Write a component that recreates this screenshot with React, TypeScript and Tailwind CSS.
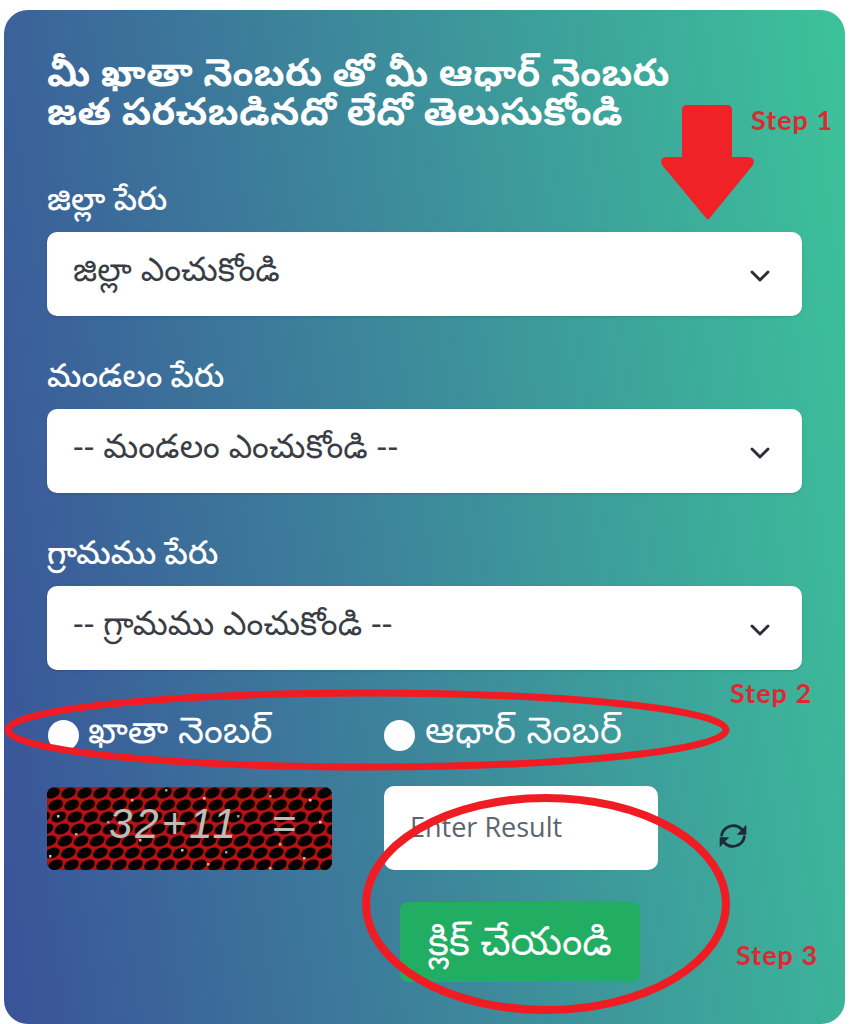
import { ChevronDown } from "lucide-react";

const font = "font-['Noto_Sans','Noto_Sans_Telugu','Lohit_Telugu','DejaVu_Sans',sans-serif]";

// noise dots on the captcha image
const specks = [
  [118, 2, "#9aa08c"], [156, 10, "#c9c9b0"], [84, 12, "#e0a080"], [222, 8, "#8fa58c"], [262, 12, "#d8d0b0"],
  [10, 28, "#e8c0a0"], [60, 34, "#8fa58c"], [28, 46, "#a8b090"], [92, 52, "#d8b090"], [134, 62, "#c8c8b0"],
  [178, 64, "#9aa08c"], [232, 56, "#e0a080"], [256, 70, "#c0c0a0"], [2, 68, "#d8c0a0"], [160, 76, "#e0b080"],
  [222, 80, "#b8b8a0"], [190, 28, "#8fa58c"], [272, 34, "#d8d0c0"],
] as const;

function SelectField({ label, value }: { label: string; value: string }) {
  return (
    <div className="flex flex-col">
      <label className="h-[46px] text-[32px] leading-[24px] font-medium text-white">{label}</label>
      <div className="h-[84px] rounded-[10px] bg-white pl-[26px] pr-[26px] flex items-center justify-between shadow-sm">
        <span className="text-[33px] leading-[40px] tracking-[0.15px] text-[#3a3e44] -mt-[10px]">{value}</span>
        <ChevronDown size={32} strokeWidth={2.2} className="text-[#2a2f36] mt-[3px]" />
      </div>
    </div>
  );
}

function Captcha() {
  return (
    <div className="relative w-[285px] h-[83px] mt-[1px] rounded-lg overflow-hidden bg-black">
      <svg width="285" height="83" className="block">
        <defs>
          <pattern id="mesh" width="16" height="24" patternUnits="userSpaceOnUse" patternTransform="skewX(-22)">
            <rect width="16" height="24" fill="#b81212" />
            <ellipse cx="8" cy="6" rx="7" ry="5.6" fill="#060202" />
            <ellipse cx="0" cy="18" rx="7" ry="5.6" fill="#060202" />
            <ellipse cx="16" cy="18" rx="7" ry="5.6" fill="#060202" />
          </pattern>
        </defs>
        <rect width="285" height="83" fill="url(#mesh)" />
        {specks.map(([x, y, c]) => (
          <rect key={`${x}-${y}`} x={x} y={y} width="2.5" height="2.5" fill={c} />
        ))}
      </svg>
      <span className="absolute left-[62px] top-[14px] text-[42px] leading-[46px] italic text-[#bdbdb8] font-['Liberation_Sans',sans-serif] tracking-[3px] [word-spacing:18px]">32+11 =</span>
    </div>
  );
}

function RefreshIcon() {
  return (
    <svg width="32" height="32" viewBox="0 0 24 24" fill="none" className="ml-[59px] mt-[34px] text-[#1f2a33]">
      <path d="M3.5 11.5A8.8 8.8 0 0 1 18.5 7" stroke="currentColor" strokeWidth="2.1" strokeLinecap="round" />
      <path d="M22 3.6V11H14.8Z" fill="currentColor" />
      <path d="M20.5 12.5A8.8 8.8 0 0 1 5.5 17" stroke="currentColor" strokeWidth="2.1" strokeLinecap="round" />
      <path d="M2 20.4V13H9.2Z" fill="currentColor" />
    </svg>
  );
}

function Annotations() {
  return (
    <svg className="absolute left-0 top-0 pointer-events-none" width="851" height="1024" viewBox="0 0 851 1024" fill="none">
      <path d="M682 110 Q682 105 687 105 L727 105 Q732 105 732 110 L732 157 L749 157 Q756 158 753 165 L709 219 Q707 220 706 218 L662 165 Q659 158 666 157 L682 157 Z" fill="#f02228" />
      <ellipse cx="367" cy="730" rx="359" ry="37" stroke="#f01c24" strokeWidth="7" />
      <ellipse cx="546" cy="904" rx="180" ry="106" stroke="#f01c24" strokeWidth="8" />
    </svg>
  );
}

function Step({ text, className }: { text: string; className: string }) {
  return (
    <span className={`absolute text-[27px] leading-[30px] font-bold text-[#dc2a30] font-['Lato',sans-serif] tracking-[1px] ${className}`}>{text}</span>
  );
}

export default function App() {
  return (
    <div className={`relative w-[851px] h-[1024px] bg-white overflow-hidden ${font}`}>
      <div className="ml-[4px] mt-[10px] w-[841px] h-[1014px] rounded-[24px] bg-[linear-gradient(82deg,#3a5299_0%,#3d8a9b_50%,#3cc39a_100%)] pl-[43px] pr-[43px] pt-[42px] flex flex-col">
        <h1 className="text-[38px] leading-[39px] tracking-[0.35px] font-bold text-white mb-[56px] whitespace-nowrap">
          మీ ఖాతా నెంబరు తో మీ ఆధార్ నెంబరు
          <br />
          జత పరచబడినదో లేదో తెలుసుకోండి
        </h1>

        <div className="flex flex-col gap-[47px]">
          <SelectField label="జిల్లా పేరు" value="జిల్లా ఎంచుకోండి" />
          <SelectField label="మండలం పేరు" value="-- మండలం ఎంచుకోండి --" />
          <SelectField label="గ్రామము పేరు" value="-- గ్రామము ఎంచుకోండి --" />
        </div>

        <div className="mt-[40px] h-[40px] flex items-center">
          <label className="w-[337px] flex items-center gap-[9px] text-[37px] leading-[36px] text-white whitespace-nowrap">
            <span className="w-[31px] h-[31px] rounded-full bg-white mt-[10px] ml-[1px] shrink-0" />
            <span className="-mt-[3px]">ఖాతా నెంబర్</span>
          </label>
          <label className="flex items-center gap-[10px] text-[37px] leading-[36px] tracking-[0.5px] text-white whitespace-nowrap">
            <span className="w-[31px] h-[31px] rounded-full bg-white mt-[10px] shrink-0" />
            <span className="-mt-[3px]">ఆధార్ నెంబర్</span>
          </label>
        </div>

        <div className="mt-[36px] flex items-start">
          <Captcha />
          <div className="ml-[52px] w-[274px] h-[84px] rounded-[10px] bg-white pl-[26px] pt-[24px] text-[27px] leading-[34px] text-[#5b6470] font-['Open_Sans',sans-serif]">
            Enter Result
          </div>
          <RefreshIcon />
        </div>

        <button className="ml-[353px] mt-[32px] w-[240px] h-[80px] rounded-[8px] bg-[#21ae63] text-white text-[40px] leading-[44px] pb-[4px]">
          క్లిక్ చేయండి
        </button>
      </div>

      <Annotations />
      <Step text="Step 1" className="left-[751px] top-[105px]" />
      <Step text="Step 2" className="left-[730px] top-[678px]" />
      <Step text="Step 3" className="left-[736px] top-[940px]" />
    </div>
  );
}
